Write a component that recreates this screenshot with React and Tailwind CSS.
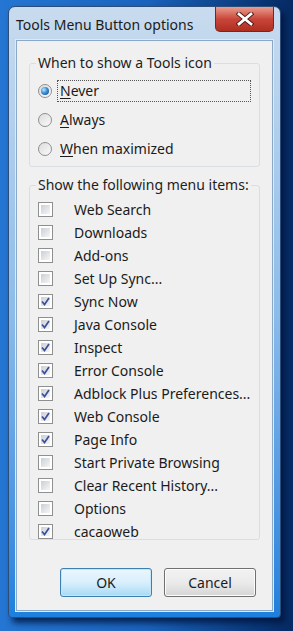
import React from "react";

const radios = [
  { label: "Never", key: "N", rest: "ever", checked: true, focus: true },
  { label: "Always", key: "A", rest: "lways" },
  { label: "When maximized", key: "W", rest: "hen maximized" },
];

const items = [
  ["Web Search", false],
  ["Downloads", false],
  ["Add-ons", false],
  ["Set Up Sync...", false],
  ["Sync Now", true],
  ["Java Console", true],
  ["Inspect", true],
  ["Error Console", true],
  ["Adblock Plus Preferences...", true],
  ["Web Console", true],
  ["Page Info", true],
  ["Start Private Browsing", false],
  ["Clear Recent History...", false],
  ["Options", false],
  ["cacaoweb", true],
];

function Radio({ checked }) {
  return (
    <span className="w-[14px] h-[14px] rounded-full border border-[#8f8f8f] bg-gradient-to-br from-[#dcdcdc] to-[#fafafa] flex items-center justify-center shrink-0">
      {checked && (
        <span className="w-[8px] h-[8px] rounded-full bg-[radial-gradient(circle_at_35%_35%,#bfe6ff_0%,#3a8fd6_45%,#0f3f7a_100%)]" />
      )}
    </span>
  );
}

function Check({ checked }) {
  return (
    <span className="w-[15px] h-[15px] border border-[#8e8f8f] bg-white p-[2px] shrink-0">
      <span className="block w-full h-full bg-gradient-to-br from-[#cbcfd5] to-[#f6f6f6] flex items-center justify-center">
        {checked && (
          <svg width="9" height="9" viewBox="0 0 9 9">
            <path d="M1 4.5 L3.5 7.5 L8 1" fill="none" stroke="#3c4f9c" strokeWidth="1.7" />
          </svg>
        )}
      </span>
    </span>
  );
}

function Group({ label, className, children }) {
  return (
    <fieldset className={`border border-[#d5dfe5] rounded-[3px] mx-[12px] px-[8px] ${className}`}>
      <legend className="px-[2px] -ml-[2px] text-[14px] leading-[16px] text-[#1e1e1e]">{label}</legend>
      {children}
    </fieldset>
  );
}

export default function App() {
  return (
    <div
      className="w-[293px] h-[631px] overflow-hidden bg-gradient-to-r from-[#2476d2] via-[#1a63bd] to-[#062a63] pt-[6px] pl-[8px]"
      style={{ fontFamily: '"Segoe UI", "Noto Sans", "Open Sans", sans-serif' }}
    >
      <div className="w-[273px] h-[612px] rounded-t-[7px] rounded-b-[4px] border border-[#2b4d78] bg-gradient-to-b from-[#c9dbee] via-[#8cbcea] to-[#1d7fdc] shadow-[4px_5px_6px_rgba(0,20,60,0.8)] flex flex-col px-[7px] pb-[6px]">
        <div className="h-[33px] flex items-start justify-between">
          <div className="pt-[9px] text-[14px] leading-[18px] text-[#1b1b1b]">Tools Menu Button options</div>
          <div className="w-[59px] h-[25px] -mr-[1px] rounded-b-[5px] border border-[#6b2a22] border-t-0 bg-gradient-to-b from-[#e79c8f] via-[#c9453a] to-[#b02e20] flex items-center justify-center">
            <svg width="18" height="14" viewBox="0 0 18 14">
              <path d="M3 2 L15 12 M15 2 L3 12" stroke="#4a1510" strokeWidth="4.5" strokeLinecap="square" />
              <path d="M3 2 L15 12 M15 2 L3 12" stroke="#ffffff" strokeWidth="2.8" strokeLinecap="square" />
            </svg>
          </div>
        </div>
        <div className="flex-1 bg-[#f0f0f0] border border-[#8aa8c8] outline outline-1 outline-[#dde9f6] flex flex-col pt-[14px]">
          <Group label="When to show a Tools icon" className="h-[112px] pt-[5px]">
            {radios.map((r) => (
              <div key={r.label} className="h-[29px] flex items-center gap-[5px]">
                <Radio checked={r.checked} />
                <span
                  className={`text-[14px] leading-[20px] text-[#1b1b1b] px-[2px] ${
                    r.focus ? "flex-1 border border-dotted border-[#555]" : "border border-transparent"
                  }`}
                >
                  <span className="underline underline-offset-2">{r.key}</span>
                  {r.rest}
                </span>
              </div>
            ))}
          </Group>
          <Group label="Show the following menu items:" className="mt-[10px] h-[363px] pt-[5px]">
            {items.map(([label, checked]) => (
              <div key={label} className="h-[23px] flex items-center">
                <Check checked={checked} />
                <span className="ml-[21px] text-[14px] leading-[20px] text-[#1b1b1b] whitespace-nowrap">{label}</span>
              </div>
            ))}
          </Group>
          <div className="mt-[28px] flex justify-end gap-[12px] pr-[16px]">
            <button className="w-[92px] h-[29px] rounded-[3px] border border-[#3c7fb1] bg-gradient-to-b from-[#eaf6fd] via-[#d9f0fc] to-[#a7d9f5] shadow-[inset_0_0_0_1px_#c4e6fa] text-[14px] text-[#1b1b1b]">
              OK
            </button>
            <button className="w-[92px] h-[29px] rounded-[3px] border border-[#707070] bg-gradient-to-b from-[#f2f2f2] via-[#ebebeb] to-[#d5d5d5] shadow-[inset_0_0_0_1px_#fcfcfc] text-[14px] text-[#1b1b1b]">
              Cancel
            </button>
          </div>
        </div>
      </div>
    </div>
  );
}
